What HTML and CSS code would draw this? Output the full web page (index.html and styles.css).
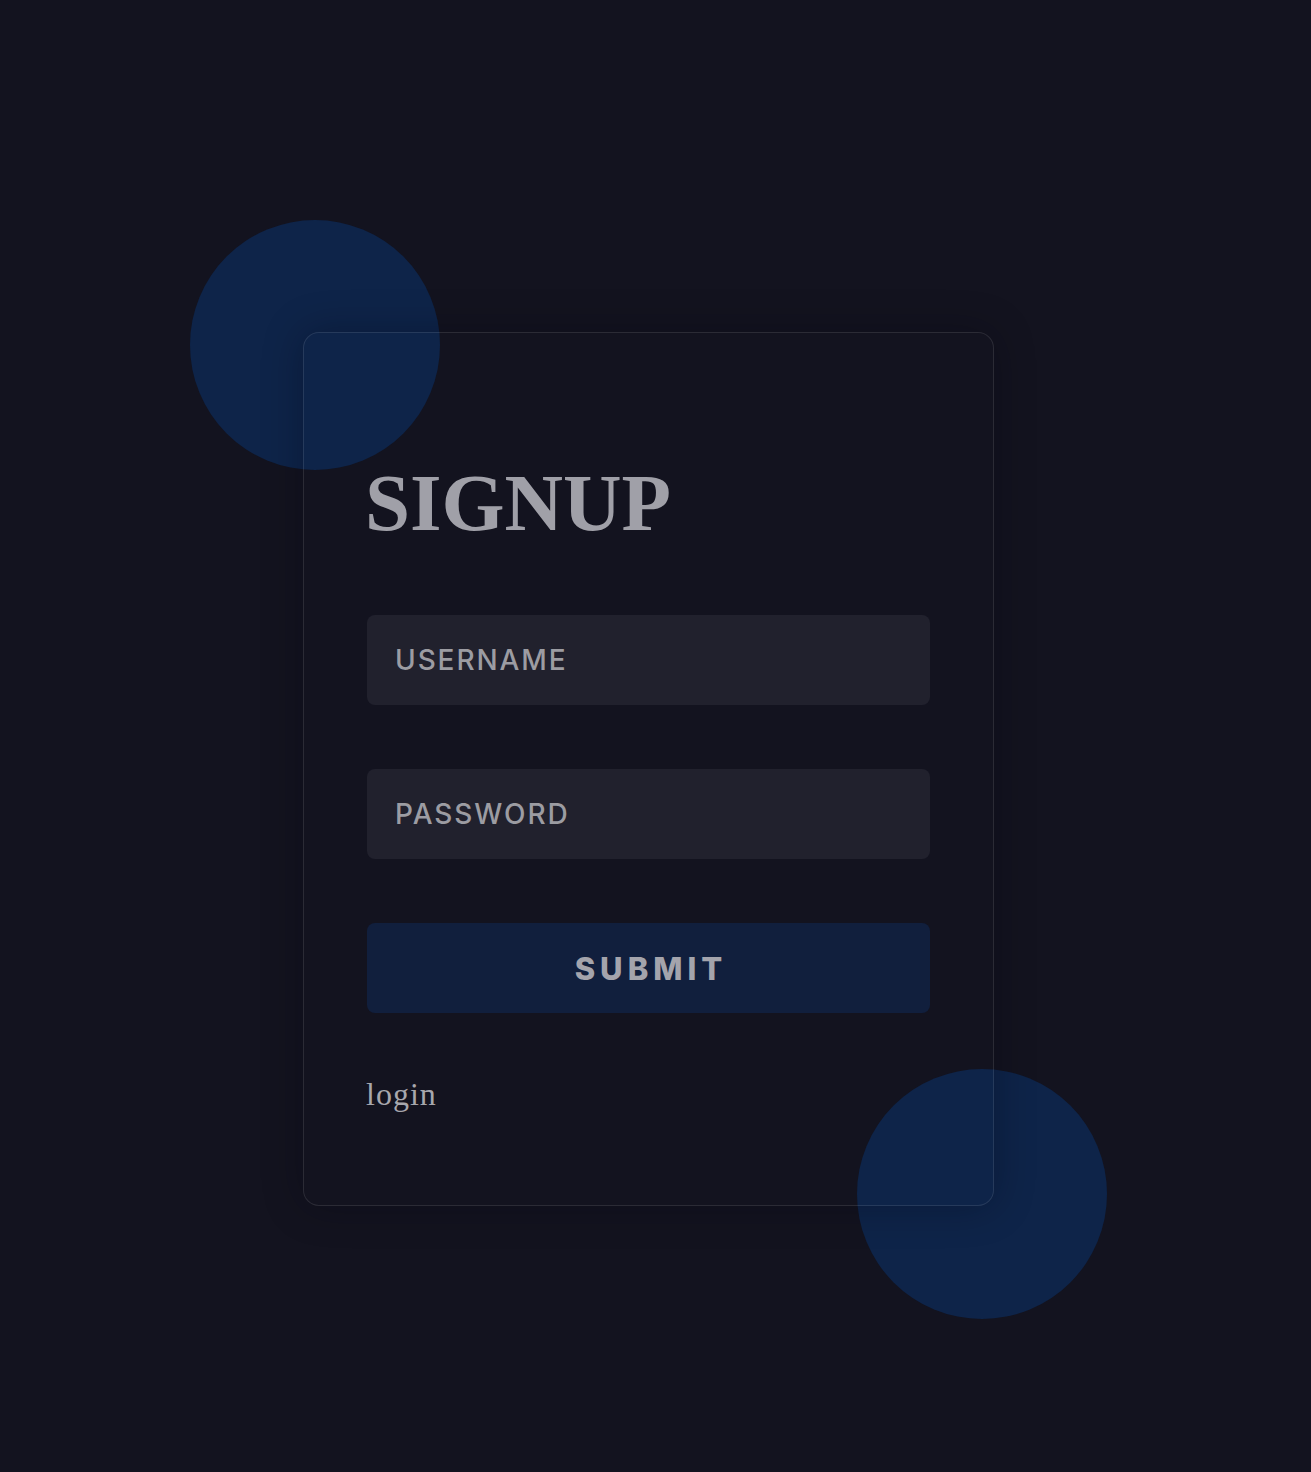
FILE: index.html
```html
<!DOCTYPE html>
<html lang="en">
<head>
<meta charset="utf-8">
<title>Signup</title>
<link rel="stylesheet" href="styles.css">
</head>
<body>
<main class="stage">
  <div class="card-wrap">
    <div class="shape shape-top"></div>
    <div class="shape shape-bottom"></div>
    <form class="card">
      <h1 class="title">SIGNUP</h1>
      <div class="field">USERNAME</div>
      <div class="field">PASSWORD</div>
      <button type="button" class="submit">SUBMIT</button>
      <a class="login" href="#">login</a>
    </form>
  </div>
</main>
</body>
</html>
```

FILE: styles.css
```css
html, body {
  margin: 0;
  padding: 0;
  background: #13131f;
}
body {
  min-height: 1472px;
}
.stage {
  padding: 332px 0 0 303px;
}
.card-wrap {
  position: relative;
  width: 691px;
}
.shape {
  position: absolute;
  width: 250px;
  height: 250px;
  border-radius: 50%;
  background: #0e2449;
}
.shape-top {
  left: -113px;
  top: -112px;
}
.shape-bottom {
  right: -113px;
  bottom: -113px;
}
.card {
  position: relative;
  box-sizing: border-box;
  width: 691px;
  padding: 130px 63px 91px 63px;
  border: 1px solid rgba(255, 255, 255, 0.1);
  border-radius: 16px;
  background: rgba(255, 255, 255, 0.003);
  box-shadow: 0 0 40px rgba(8, 7, 16, 0.3);
  display: flex;
  flex-direction: column;
}
.title {
  margin: 0 0 72px 0;
  font-family: "Liberation Serif", "Times New Roman", serif;
  font-weight: 700;
  font-size: 81px;
  line-height: 80px;
  color: #a0a0a8;
  text-indent: -2px;
}
.field {
  height: 90px;
  box-sizing: border-box;
  border-radius: 8px;
  background: #21212d;
  padding-left: 28px;
  display: flex;
  align-items: center;
  font-family: Inter, "Noto Sans", sans-serif;
  font-weight: 500;
  font-size: 28px;
  letter-spacing: 1.9px;
  color: #9c9ca2;
  margin-bottom: 64px;
}
.submit {
  height: 90px;
  border: none;
  border-radius: 8px;
  background: #111f3d;
  font-family: Inter, "Noto Sans", sans-serif;
  font-weight: 800;
  font-size: 31px;
  letter-spacing: 5px;
  text-indent: 5px;
  color: #a4a4ac;
  padding: 0;
  margin-bottom: 61px;
}
.login {
  font-family: "Liberation Serif", "Times New Roman", serif;
  font-size: 32px;
  line-height: 40px;
  letter-spacing: 1px;
  color: #a7a7ad;
  text-decoration: none;
  align-self: flex-start;
  margin-left: -1px;
}
```
